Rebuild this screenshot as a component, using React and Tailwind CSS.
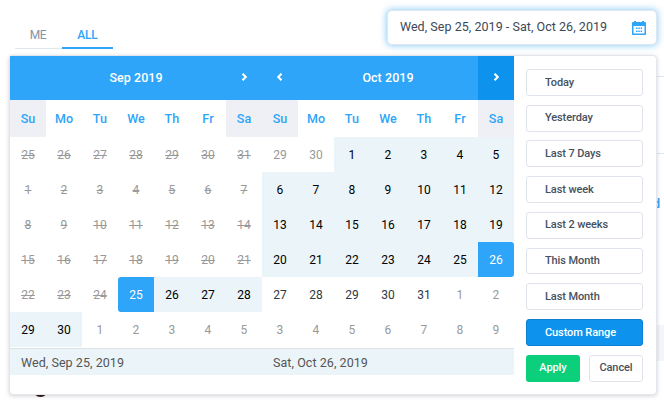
import clsx from "clsx";

const WEEKDAYS = ["Su", "Mo", "Tu", "We", "Th", "Fr", "Sa"];

const RANGES = [
  "Today",
  "Yesterday",
  "Last 7 Days",
  "Last week",
  "Last 2 weeks",
  "This Month",
  "Last Month",
  "Custom Range",
];

// Consecutive days sharing one state
const span = (from, to, state) =>
  Array.from({ length: to - from + 1 }, (_, i) => ({ day: from + i, state }));

const SEPTEMBER = [
  ...span(25, 31, "disabled"),
  ...span(1, 24, "disabled"),
  ...span(25, 25, "start"),
  ...span(26, 30, "range"),
  ...span(1, 5, "off"),
];

const OCTOBER = [
  ...span(29, 30, "off"),
  ...span(1, 25, "range"),
  ...span(26, 26, "end"),
  ...span(27, 31, "open"),
  ...span(1, 9, "off"),
];

const DAY_STYLES = {
  disabled: "text-[#999] line-through",
  off: "text-[#999]",
  open: "text-[#2f3740]",
  range: "bg-[#ebf4f8] text-black",
  start: "bg-[#2ea5f8] text-white rounded-l-[3px]",
  end: "bg-[#2ea5f8] text-white rounded-r-[3px]",
};

function Chevron({ left }) {
  return (
    <svg
      className={clsx("h-[8px] w-[6px]", left && "-scale-x-100")}
      viewBox="0 0 6 8"
      fill="none"
      stroke="white"
      strokeWidth="2.2"
    >
      <path d="M1.500 0.800L4.800 4L1.500 7.200" />
    </svg>
  );
}

function CalendarIcon() {
  return (
    <svg className="mt-[2px] h-[15px] w-[14px]" viewBox="0 0 14 15" fill="#2ea5f8">
      <path
        fillRule="evenodd"
        d="M2 0h2v1h6V0h2v1h1q1 0 1 1v11q0 1-1 1H1q-1 0-1-1V2q0-1 1-1h1zM1.500 5v7.500h11V5z"
      />
      <path d="M4 6.500h1.500v1.500H4zM6.300 6.500h1.500v1.500H6.300zM8.600 6.500h1.500v1.500H8.600zM4 9.400h1.500v1.500H4zM6.300 9.400h1.500v1.500H6.300zM8.600 9.400h1.500v1.500H8.600z" />
    </svg>
  );
}

function Month({ title, days, prev, nextActive }) {
  return (
    <div className="w-[252px]">
      <div className="flex h-11 bg-[#2ea5f8] text-white">
        <div className="flex w-9 items-center justify-center pb-[2px]">
          {prev && <Chevron left />}
        </div>
        <div className="flex flex-1 items-center justify-center text-[12.5px] font-medium tracking-[0.05px]">
          {title}
        </div>
        <div
          className={clsx(
            "flex w-9 items-center justify-center pb-[2px]",
            nextActive && "bg-[#0d92ed]"
          )}
        >
          <Chevron />
        </div>
      </div>

      <div className="grid h-[37px] grid-cols-7 text-[12.5px] font-medium tracking-[0.1px] text-[#2ea5f8]">
        {WEEKDAYS.map((name) => (
          <div
            key={name}
            className={clsx(
              "flex items-center justify-center pt-[2px]",
              name.startsWith("S") && "bg-[#eff0f5]"
            )}
          >
            {name}
          </div>
        ))}
      </div>

      <div className="grid grid-cols-7 text-[12px] tracking-[0.1px]">
        {days.map(({ day, state }, i) => (
          <div
            key={i}
            className={clsx(
              "flex h-[35px] items-center justify-center pt-px",
              DAY_STYLES[state]
            )}
          >
            {day}
          </div>
        ))}
      </div>
    </div>
  );
}

function RangeMenu() {
  return (
    <div className="absolute top-[55px] left-[9px] flex h-[340px] w-[648px] rounded-[4px] border border-[#e2e7ed] bg-white shadow-[0_1px_4px_rgba(0,0,0,0.18)]">
      <div>
        <div className="flex">
          <Month title="Sep 2019" days={SEPTEMBER} />
          <Month title="Oct 2019" days={OCTOBER} prev nextActive />
        </div>
        <div className="mt-px grid h-[27px] grid-cols-2 items-center border-t border-[#dfe2e4] bg-[#ebf4f8] pt-[3px] text-[12.5px] tracking-[0.06px] text-[#555]">
          <span className="pl-[11px]">Wed, Sep 25, 2019</span>
          <span className="pl-[11px]">Sat, Oct 26, 2019</span>
        </div>
      </div>

      <div className="flex flex-col gap-[8.95px] pt-[13px] pl-3 text-[11px] font-medium tracking-[-0.1px] text-[#465160]">
        {RANGES.map((label) => (
          <button
            key={label}
            className={clsx(
              "flex h-[26.8px] w-[117px] items-center rounded-[3px] border pt-[0.8px] pl-[18px] text-left",
              label === "Custom Range"
                ? "border-[#0b7fd0] bg-[#0d92ed] text-white"
                : "border-[#dfe4ea] bg-white"
            )}
          >
            {label}
          </button>
        ))}
        <div className="flex gap-[9px]">
          <button className="h-[27px] w-[54px] rounded-[3px] bg-[#0ccf7b] pb-px text-white">
            Apply
          </button>
          <button className="h-[27px] w-[54px] rounded-[3px] border border-[#dfe4ea] pb-px">
            Cancel
          </button>
        </div>
      </div>
    </div>
  );
}

export default function App() {
  return (
    <div className="relative h-[402px] w-[664px] overflow-hidden bg-white font-['Roboto',sans-serif]">
      {/* Page content, mostly hidden by the open menu */}
      <div className="flex justify-between pt-[10px] pl-[15px]">
        <div className="flex h-[39px] items-end text-[12px]">
          <div className="flex h-[27px] w-[47px] justify-center border-b border-[#dfe8ef] pt-[4px] pr-px tracking-[-0.3px] text-[#8492a6]">
            ME
          </div>
          <div className="flex h-[27px] w-[51px] justify-center border-b-2 border-[#2ea5f8] pt-[4px] font-medium tracking-[-0.2px] text-[#2ea5f8]">
            ALL
          </div>
        </div>
        <div className="mr-[7px] flex h-[35px] w-[270px] items-center justify-between rounded-[5px] border border-[#e0e6ed] bg-white pr-[10px] pl-[12px] text-[12.5px] tracking-[0.04px] text-[#3c4858] shadow-[0_0_6px_1px_rgba(46,165,248,0.5)]">
          <span className="pb-px">Wed, Sep 25, 2019 - Sat, Oct 26, 2019</span>
          <CalendarIcon />
        </div>
      </div>
      <div className="ml-auto flex w-5 flex-col">
        <div className="mt-[27px] h-px bg-[#e0e6ed]" />
        <div className="mt-[76px] h-px bg-[#e0e6ed]" />
        <div className="mt-[41px] h-[18px] pr-[4px] text-right text-[12.5px] leading-[18px] font-medium text-[#2ea5f8]">
          d
        </div>
        <div className="mt-[112px] h-9 bg-[#f3f5f8]" />
      </div>
      {/* Round mark peeking out under the menu */}
      <div className="mt-[21px] ml-[33px] h-[15px] w-[15px] rounded-full bg-[#33191c]" />

      <RangeMenu />
    </div>
  );
}
